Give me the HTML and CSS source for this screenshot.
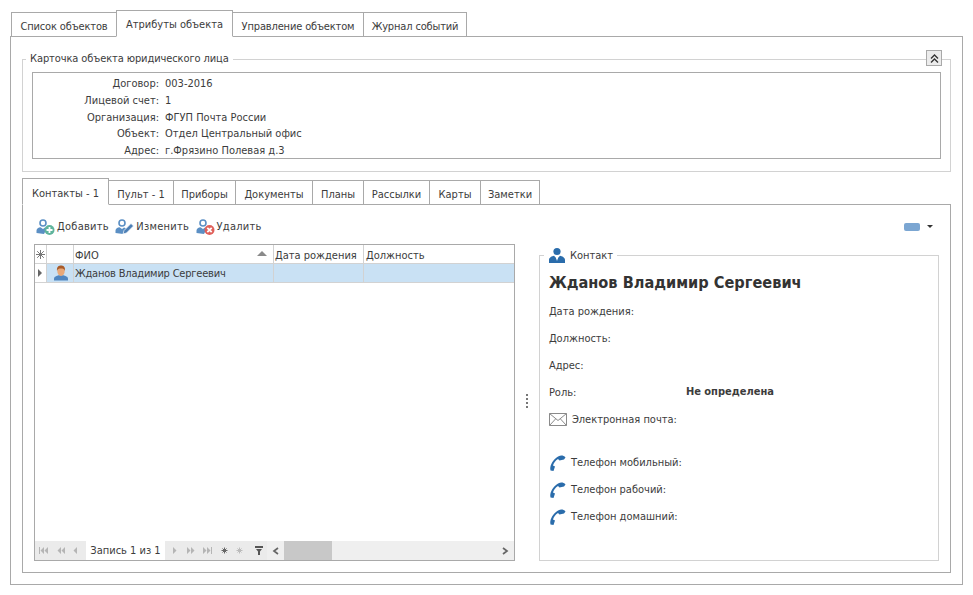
FILE: index.html
```html
<!DOCTYPE html>
<html lang="ru">
<head>
    <meta charset="UTF-8">
    <title>Атрибуты объекта</title>
    <link rel="stylesheet" href="styles.css">
</head>
<body>
    <svg class="defs" width="0" height="0">
        <symbol id="phone" viewBox="0 0 18 18">
            <path d="M16.500 3.500C14 .5 10 1 7 4 3 7.500.5 12 1.500 16.500l3 .5L6 12.500l-2-1c.5-2.500 2.500-5 5-6.500l1.500 1.500 4.500-1z" fill="#2a6cab"/>
        </symbol>
        <symbol id="person" viewBox="0 0 16 16">
            <circle cx="7" cy="4" r="3" fill="none" stroke="#5b8fc4" stroke-width="1.600"/>
            <path d="M.5 14v-2.500C.5 9.500 2.500 8.500 4.500 8.200L7 10l2-1.600 2 .8-3 5.800z" fill="#5b8fc4"/>
        </symbol>
    </svg>

    <div class="tabs top">
        <div class="tab">Список объектов</div>
        <div class="tab active">Атрибуты объекта</div>
        <div class="tab">Управление объектом</div>
        <div class="tab">Журнал событий</div>
    </div>

    <main class="panel">
        <fieldset class="card">
            <legend>Карточка объекта юридического лица</legend>
            <button class="collapse" type="button">
                <svg width="9" height="9" viewBox="0 0 9 9"><path d="M1 4.500l3.500-3.500L8 4.500M1 8.500L4.500 5 8 8.500" fill="none" stroke="#333" stroke-width="1.300"/></svg>
            </button>
            <div class="card-box">
                <span class="lbl">Договор:</span><span>003-2016</span>
                <span class="lbl">Лицевой счет:</span><span>1</span>
                <span class="lbl">Организация:</span><span>ФГУП Почта России</span>
                <span class="lbl">Объект:</span><span>Отдел Центральный офис</span>
                <span class="lbl">Адрес:</span><span>г.Фрязино Полевая д.3</span>
            </div>
        </fieldset>

        <div class="tabs sub">
            <div class="tab active">Контакты - 1</div>
            <div class="tab">Пульт - 1</div>
            <div class="tab">Приборы</div>
            <div class="tab">Документы</div>
            <div class="tab">Планы</div>
            <div class="tab">Рассылки</div>
            <div class="tab">Карты</div>
            <div class="tab">Заметки</div>
        </div>

        <section class="panel inner">
            <div class="toolbar">
                <span class="tool">
                    <svg width="20" height="18" viewBox="0 0 20 18"><use href="#person" width="16" height="16" y="1"/><circle cx="13.500" cy="12" r="5" fill="#5fb49c"/><path d="M13.500 9v6M10.500 12h6" stroke="#fff" stroke-width="1.800"/></svg>
                    Добавить
                </span>
                <span class="tool">
                    <svg width="20" height="18" viewBox="0 0 20 18"><use href="#person" width="16" height="16" y="1"/><path d="M8 16l1-3.500 7-7 2.500 2.500-7 7z" fill="#4d7fb5" stroke="#fff" stroke-width=".7"/></svg>
                    Изменить
                </span>
                <span class="tool">
                    <svg width="20" height="18" viewBox="0 0 20 18"><use href="#person" width="16" height="16" y="1"/><circle cx="13.500" cy="12" r="5" fill="#e0605a"/><path d="M11.300 9.800l4.400 4.400M15.700 9.800l-4.400 4.400" stroke="#fff" stroke-width="1.800"/></svg>
                    Удалить
                </span>
                <span class="color-pick"><i class="swatch"></i><i class="caret"></i></span>
            </div>

            <div class="work">
                <div class="grid">
                    <div class="grid-row head">
                        <div class="cell ind">
                            <svg width="9" height="9" viewBox="0 0 9 9"><path d="M4.500 0v9M0 4.500h9M1.200 1.200l6.600 6.600M7.800 1.200L1.200 7.800" stroke="#777" stroke-width="1"/></svg>
                        </div>
                        <div class="cell pic"></div>
                        <div class="cell fio">ФИО<i class="sort"></i></div>
                        <div class="cell date">Дата рождения</div>
                        <div class="cell job">Должность</div>
                    </div>
                    <div class="grid-row selected">
                        <div class="cell ind"><i class="arrow"></i></div>
                        <div class="cell pic">
                            <svg width="16" height="16" viewBox="0 0 16 16"><path d="M1 15.500v-2c0-1.800 3-2.800 4.500-3.300h5c1.500.5 4.500 1.500 4.500 3.300v2z" fill="#4f86c0"/><ellipse cx="8" cy="6" rx="3.700" ry="5" fill="#e8a878"/><path d="M4 6C3.500 1.500 6 .5 8 .5s4.500 1 4 5.500C11.500 4 10 3.500 8 3.500S4.500 4 4 6z" fill="#a85a28"/></svg>
                        </div>
                        <div class="cell fio">Жданов Владимир Сергеевич</div>
                        <div class="cell date"></div>
                        <div class="cell job"></div>
                    </div>
                    <div class="grid-body"></div>
                    <div class="grid-foot">
                        <svg class="nav" width="51" height="19" viewBox="0 0 51 19"><path d="M4 6h1v7H4zM9 6v7l-3.500-3.500zM13 6v7L9.500 9.500zM26 6v7l-3.500-3.500zM30 6v7l-3.500-3.500zM42 6v7l-3.500-3.500z" fill="#b5b5b5"/></svg>
                        <div class="rec">Запись 1 из 1</div>
                        <svg class="nav" width="102" height="19" viewBox="0 0 102 19"><path d="M8 6v7l3.500-3.500zM22 6v7l3.500-3.500zM26 6v7l3.500-3.500zM38 6v7l3.500-3.500zM42 6v7l3.500-3.500zM46 6h1v7h-1z" fill="#b5b5b5"/><path d="M59.500 6.500v6M56.500 9.500h6M57.500 7.500l4 4M61.500 7.500l-4 4" stroke="#666"/><path d="M74.500 6.500v6M71.500 9.500h6M72.500 7.500l4 4M76.500 7.500l-4 4" stroke="#bbb"/><path d="M90 5h8v2h-8zM91 8h6l-2 2.500V14h-2v-3.500z" fill="#555"/></svg>
                        <div class="scroll">
                            <span class="sbtn">
                                <svg width="8" height="8" viewBox="0 0 8 8"><path d="M6 1L2 4l4 3" fill="none" stroke="#666" stroke-width="1.700"/></svg>
                            </span>
                            <span class="thumb"></span>
                            <span class="sbtn end">
                                <svg width="8" height="8" viewBox="0 0 8 8"><path d="M2 1l4 3-4 3" fill="none" stroke="#666" stroke-width="1.700"/></svg>
                            </span>
                        </div>
                    </div>
                </div>

                <div class="splitter"><i></i><i></i><i></i><i></i></div>

                <fieldset class="contact">
                    <legend>
                        <svg width="18" height="17" viewBox="0 0 18 17"><circle cx="9" cy="4.500" r="3.600" fill="#2a6cab"/><path d="M1 16v-3c0-2.500 3-3.800 5-4.200L9 12l3-3.200c2 .4 5 1.700 5 4.200v3z" fill="#2a6cab"/><path d="M9 9.500L8 11l1 3 1-3z" fill="#fff"/></svg>
                        Контакт
                    </legend>
                    <h2>Жданов Владимир Сергеевич</h2>
                    <div class="field">Дата рождения:</div>
                    <div class="field">Должность:</div>
                    <div class="field">Адрес:</div>
                    <div class="field role"><span>Роль:</span><b>Не определена</b></div>
                    <div class="field icon mail">
                        <svg width="18" height="13" viewBox="0 0 18 13"><path d="M.5.500h17v12H.5zM.5.500L9 7.500l8.500-7M.5 12.500L6.500 6M17.500 12.500L11.500 6" fill="none" stroke="#8a8a8a"/></svg>
                        Электронная почта:
                    </div>
                    <div class="phones">
                        <div class="field icon"><svg width="18" height="18"><use href="#phone"/></svg>Телефон мобильный:</div>
                        <div class="field icon"><svg width="18" height="18"><use href="#phone"/></svg>Телефон рабочий:</div>
                        <div class="field icon"><svg width="18" height="18"><use href="#phone"/></svg>Телефон домашний:</div>
                    </div>
                </fieldset>
            </div>
        </section>
    </main>
</body>
</html>
```

FILE: styles.css
```css
/* Base */
* {
    margin: 0;
    padding: 0;
    box-sizing: border-box;
}

body {
    font-family: "DejaVu Sans Condensed", "DejaVu Sans", sans-serif;
    font-stretch: condensed;
    font-size: 11px;
    line-height: 14px;
    color: #3c3c3c;
    background: #fff;
    padding: 10px 10px 0;
    height: 595px;
    overflow: hidden;
}

.defs {
    position: absolute;
}

i {
    display: block;
}

/* Tabs */
.tabs {
    display: flex;
    align-items: flex-end;
    padding-left: 1px;
    height: 27px;
    margin-bottom: -1px;
    position: relative;
}

.tab {
    flex: none;
    height: 25px;
    padding-top: 7px;
    border: 1px solid #a9a9a9;
    margin-right: -1px;
    background: #fff;
    white-space: nowrap;
    text-align: center;
}

.tab.active {
    height: 27px;
    border-bottom-color: #fff;
    position: relative;
    z-index: 1;
}

.top .tab {
    letter-spacing: -.15px;
}

.top .tab.active {
    letter-spacing: 0;
}

.top .tab:nth-child(1) { width: 106px; }
.top .tab:nth-child(2) { width: 117px; }
.top .tab:nth-child(3) { width: 132px; }
.top .tab:nth-child(4) { width: 104px; }

.panel {
    border: 1px solid #a9a9a9;
    height: 549px;
    padding: 15px 11px 0;
}

/* Card */
fieldset {
    border: 1px solid #d2d2d2;
    min-width: 0;
}

legend {
    margin-left: -6px;
    padding: 0 4px;
}

.card {
    height: 120px;
    padding: 6px 9px 0;
    position: relative;
}

.card legend {
    letter-spacing: -.1px;
}

.collapse {
    position: absolute;
    top: -16px;
    right: 8px;
    width: 16px;
    height: 16px;
    border: 1px solid #a9a9a9;
    background: #ececec;
    display: flex;
    align-items: center;
    justify-content: center;
}

.card-box {
    border: 1px solid #a9a9a9;
    height: 87px;
    padding-top: 4px;
    display: grid;
    grid-template-columns: 126px 1fr;
    grid-auto-rows: 16.8px;
    column-gap: 6px;
}

.lbl {
    text-align: right;
}

/* Inner tabs */
.tabs.sub {
    padding-left: 0;
    margin-top: 6px;
}

.sub .tab.active {
    padding-top: 8px;
}

.sub .tab:nth-child(1) { width: 87px; }
.sub .tab:nth-child(2) { width: 66px; }
.sub .tab:nth-child(3) { width: 63px; }
.sub .tab:nth-child(4) { width: 78px; }
.sub .tab:nth-child(5) { width: 52px; }
.sub .tab:nth-child(6) { width: 67px; }
.sub .tab:nth-child(7) { width: 52px; }
.sub .tab:nth-child(8) { width: 60px; }

.panel.inner {
    height: 369px;
    padding: 0 11px;
}

.toolbar {
    height: 39px;
    display: flex;
    align-items: center;
    padding: 4px 0 0 2px;
    gap: 6.5px;
}

.tool {
    display: flex;
    align-items: center;
    gap: 1px;
    letter-spacing: .25px;
}

.color-pick {
    margin-left: auto;
    display: flex;
    align-items: center;
    gap: 7px;
    padding-right: 6px;
}

.swatch {
    width: 16px;
    height: 8px;
    border-radius: 2px;
    background: #7ba6d2;
}

.caret {
    border: 3px solid transparent;
    border-top: 3px solid #333;
    margin-top: 3px;
}

.work {
    display: flex;
}

/* Grid */
.grid {
    width: 482px;
    height: 317px;
    border: 1px solid #a9a9a9;
    display: flex;
    flex-direction: column;
}

.grid-row {
    display: flex;
    height: 19px;
    border-bottom: 1px solid #d2d2d2;
    flex: none;
}

.grid-row.selected {
    background: #c9e1f4;
}

.cell {
    border-right: 1px solid #d2d2d2;
    padding: 3px 2px 0;
    position: relative;
    white-space: nowrap;
}

.head .cell {
    padding-top: 4px;
}

.head .pic {
    padding: 0;
}

.ind {
    width: 12px;
    padding: 4px 0 0 1px;
}

.pic {
    width: 27px;
    padding: 1px 0 0 6px;
}

.fio {
    width: 200px;
    padding-left: 1px;
}

.selected .fio {
    letter-spacing: -.2px;
}

.date {
    width: 90px;
    padding-left: 1px;
}

.job {
    flex: 1;
    border-right: 0;
}

.selected .ind {
    background: #fff;
}

.sort {
    position: absolute;
    right: 6px;
    top: 6px;
    border: 5px solid transparent;
    border-top: 0;
    border-bottom: 5px solid #8a8a8a;
}

.arrow {
    border: 4px solid transparent;
    border-left: 4px solid #666;
    border-right: 0;
    margin: 1px 0 0 2px;
}

.grid-body {
    flex: 1;
}

.grid-foot {
    display: flex;
    height: 19px;
    align-items: stretch;
    background: #ebebeb;
}

.nav {
    flex: none;
}

.rec {
    width: 79px;
    background: #fff;
    text-align: center;
    padding-top: 3px;
}

.scroll {
    flex: 1;
    display: flex;
    background: #efefef;
}

.sbtn {
    width: 17px;
    display: flex;
    align-items: center;
    justify-content: center;
}

.sbtn.end {
    margin-left: auto;
}

.thumb {
    width: 48px;
    background: #c8c8c8;
}

/* Splitter */
.splitter {
    width: 24px;
    display: flex;
    flex-direction: column;
    align-items: center;
    justify-content: center;
    gap: 2px;
    padding-bottom: 3px;
}

.splitter i {
    width: 2px;
    height: 2px;
    background: #777;
}

/* Contact */
.contact {
    width: 401px;
    height: 314px;
    margin-top: 3px;
    padding: 0 9px;
}

.contact legend {
    display: flex;
    align-items: center;
    gap: 4px;
    height: 17px;
    margin-left: -5px;
}

.contact h2 {
    font-size: 16.2px;
    line-height: 20px;
    font-weight: 700;
    margin: 9px 0 5px;
    color: #333;
}

.field {
    height: 27px;
    padding-top: 7px;
}

.field.role {
    display: flex;
}

.field.role span {
    width: 137px;
}

.field.role b {
    margin-top: -1px;
}

.field.icon {
    display: flex;
    align-items: center;
    gap: 4px;
    padding-top: 0;
}

.field.mail {
    gap: 5px;
}

.phones {
    margin-top: 16px;
}
```
